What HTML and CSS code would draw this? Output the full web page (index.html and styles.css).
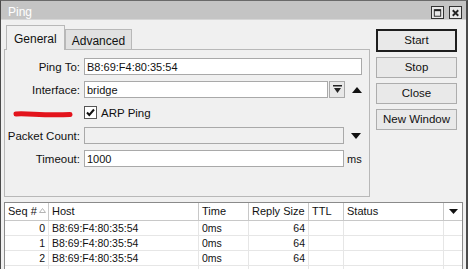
FILE: index.html
```html
<!doctype html>
<html>
    <head>
        <meta charset="UTF-8">
        <title>Ping</title>
        <link rel="stylesheet" href="styles.css">
    </head>
    <body>
        <div class="window">
            <div class="titlebar">
                <span class="title">Ping</span>
                <span class="tbtn">
                    <svg width="12" height="12" viewBox="0 0 12 12"><rect x="2.5" y="2.5" width="7" height="7" fill="none" stroke="#222" stroke-width="1"/><line x1="2.5" y1="3" x2="9.5" y2="3" stroke="#222" stroke-width="2"/></svg>
                </span>
                <span class="tbtn">
                    <svg width="12" height="12" viewBox="0 0 12 12"><path d="M3 3 L9 9 M9 3 L3 9" stroke="#222" stroke-width="2"/></svg>
                </span>
            </div>
            <div class="content">
                <div class="top">
                    <div class="tabbox">
                        <div class="tabs">
                            <div class="tab active">General</div>
                            <div class="tab">Advanced</div>
                        </div>
                        <div class="panel">
                            <div class="row">
                                <div class="label">Ping To:</div>
                                <div class="input wide">B8:69:F4:80:35:54</div>
                            </div>
                            <div class="row">
                                <div class="label">Interface:</div>
                                <div class="input iface">bridge</div>
                                <div class="dropbtn">
                                    <svg width="9" height="9" viewBox="0 0 9 9"><rect x="0" y="0" width="9" height="1.5" fill="#222"/><path d="M1 3 H8 L4.5 8 Z" fill="#222"/></svg>
                                </div>
                                <div class="arrow">
                                    <svg width="10" height="6" viewBox="0 0 10 6"><path d="M0 6 L5 0 L10 6 Z" fill="#111"/></svg>
                                </div>
                            </div>
                            <div class="row">
                                <div class="label">
                                    <svg class="scribble" width="60" height="8" viewBox="0 0 60 8"><path d="M3 4 C15 3, 30 6, 57 4.5" stroke="#e3141c" stroke-width="5" stroke-linecap="round" fill="none"/></svg>
                                </div>
                                <div class="check">
                                    <svg width="11" height="11" viewBox="0 0 11 11"><path d="M2 5.5 L4.3 8 L9 2.5" stroke="#111" stroke-width="2" fill="none"/></svg>
                                </div>
                                <div class="checklabel">ARP Ping</div>
                            </div>
                            <div class="row">
                                <div class="label">Packet Count:</div>
                                <div class="input mid disabled"></div>
                                <div class="arrow">
                                    <svg width="10" height="6" viewBox="0 0 10 6"><path d="M0 0 L10 0 L5 6 Z" fill="#111"/></svg>
                                </div>
                            </div>
                            <div class="row">
                                <div class="label">Timeout:</div>
                                <div class="input mid">1000</div>
                                <div class="unit">ms</div>
                            </div>
                        </div>
                    </div>
                    <div class="buttons">
                        <div class="btn default">Start</div>
                        <div class="btn">Stop</div>
                        <div class="btn">Close</div>
                        <div class="btn">New Window</div>
                    </div>
                </div>
                <div class="table">
                    <div class="th">Seq #<svg class="sort" width="7" height="5" viewBox="0 0 7 5"><path d="M0.5 4.5 L3.5 0.5 L6.5 4.5 Z" fill="none" stroke="#b4b4b4" stroke-width="1"/></svg></div>
                    <div class="th">Host</div>
                    <div class="th">Time</div>
                    <div class="th">Reply Size</div>
                    <div class="th">TTL</div>
                    <div class="th">Status</div>
                    <div class="th menu">
                        <svg width="9" height="5" viewBox="0 0 9 5"><path d="M0 0 L9 0 L4.5 5 Z" fill="#111"/></svg>
                    </div>

                    <div class="td right">0</div>
                    <div class="td">B8:69:F4:80:35:54</div>
                    <div class="td">0ms</div>
                    <div class="td right">64</div>
                    <div class="td"></div>
                    <div class="td"></div>
                    <div class="td"></div>

                    <div class="td right">1</div>
                    <div class="td">B8:69:F4:80:35:54</div>
                    <div class="td">0ms</div>
                    <div class="td right">64</div>
                    <div class="td"></div>
                    <div class="td"></div>
                    <div class="td"></div>

                    <div class="td right">2</div>
                    <div class="td">B8:69:F4:80:35:54</div>
                    <div class="td">0ms</div>
                    <div class="td right">64</div>
                    <div class="td"></div>
                    <div class="td"></div>
                    <div class="td"></div>

                    <div class="td"></div>
                    <div class="td"></div>
                    <div class="td"></div>
                    <div class="td"></div>
                    <div class="td"></div>
                    <div class="td"></div>
                    <div class="td"></div>
                </div>
            </div>
        </div>
    </body>
</html>
```

FILE: styles.css
```css
*{
    margin: 0;
    padding: 0;
    box-sizing: border-box;
}
body{
    background: #ffffff;
    font-family: "Liberation Sans", Arial, sans-serif;
    font-size: 11px;
    color: #111;
}
.window{                            /* outer window frame */
    width: 468px;
    height: 269px;
    border-top: 1px solid #6a6a6a;
    border-left: 1px solid #4a4a4a;
    border-right: 2px solid #4a4a4a;
    display: flex;
    flex-direction: column;
    overflow: hidden;
}
.titlebar{
    height: 20px;
    background: #c4c4c4;
    border-bottom: 1px solid #d6d6d6;
    display: flex;
    align-items: center;
    padding: 0 4px 0 7px;
}
.title{
    flex: 1;
    color: #ffffff;
    font-size: 12px;
    padding-top: 3px;
}
.tbtn{
    width: 13px;
    height: 13px;
    margin: 5px 0 0 5px;
    border: 1px solid #333;
    background: #e8e8e8;
    display: flex;
    align-items: center;
    justify-content: center;
}
.content{
    flex: 1;
    background: #f0f0f0;
    padding: 5px 3px 0 3px;
    display: flex;
    flex-direction: column;
}
.top{
    display: flex;
}
.tabbox{
    flex: 1;
}
.tabs{
    display: flex;
    align-items: flex-end;
    padding-left: 2px;
    height: 24px;
}
.tab{
    height: 20px;
    padding: 4px 6px 0 6px;
    border: 1px solid #b8b8b8;
    border-bottom: none;
    background: #e1e1e1;
    font-size: 12px;
}
.tab.active{
    height: 25px;
    margin-bottom: -1px;
    padding: 6px 7px 0 7px;
    background: #f0f0f0;
    position: relative;
    z-index: 1;
}
.panel{
    height: 148px;
    border: 1px solid #b8b8b8;
    padding-top: 8px;
}
.row{
    display: flex;
    align-items: center;
    height: 17px;
    margin-bottom: 6px;
}
.label{
    width: 79px;
    padding-right: 4px;
    text-align: right;
    white-space: nowrap;
    font-size: 11.5px;
}
.scribble{
    display: block;
    margin: 2px 0 0 8px;
}
.input{
    height: 17px;
    border: 1px solid #a9a9a9;
    background: #ffffff;
    padding: 1px 2px 0 2px;
    font-size: 11px;
    line-height: 14px;
}
.input.wide{
    width: 278px;
}
.input.iface{
    width: 244px;
}
.input.mid{
    width: 260px;
}
.input.disabled{
    background: #f0f0f0;
}
.dropbtn{
    width: 16px;
    height: 17px;
    margin-left: 1px;
    border: 1px solid #a9a9a9;
    background: #e8e8e8;
    display: flex;
    align-items: center;
    justify-content: center;
}
.arrow{
    margin-left: 7px;
    display: flex;
}
.check{
    width: 13px;
    height: 13px;
    border: 1px solid #555;
    background: #ffffff;
    display: flex;
    align-items: center;
    justify-content: center;
}
.checklabel{
    margin-left: 4px;
    font-size: 11.5px;
}
.unit{
    margin-left: 3px;
    font-size: 11px;
}
.buttons{                           /* right hand button column */
    width: 81px;
    margin: 4px 6px 0 6px;
    display: flex;
    flex-direction: column;
    gap: 5px;
}
.btn{
    height: 21px;
    border: 1px solid #adadad;
    background: #e9e9e9;
    font-size: 11.5px;
    text-align: center;
    line-height: 19px;
}
.btn.default{
    height: 23px;
    border: 2px solid #1e1e1e;
    line-height: 19px;
}
.table{
    margin-top: 5px;
    border: 1px solid #8a8a8a;
    background: #ffffff;
    display: grid;
    grid-template-columns: 44px 150px 50px 60px 35px 100px 1fr;
    grid-auto-rows: 15px;
    grid-template-rows: 18px;
}
.th{
    padding: 2px 3px 0 3px;
    border-right: 1px solid #c8c8c8;
    border-bottom: 1px solid #c8c8c8;
    font-size: 11px;
    white-space: nowrap;
}
.th.menu{
    border-right: none;
    display: flex;
    justify-content: center;
    padding-top: 6px;
}
.sort{
    margin: 0 0 4px 2px;
    vertical-align: middle;
}
.td{
    padding: 1px 3px 0 3px;
    border-right: 1px solid #e6e6e6;
    border-bottom: 1px solid #e6e6e6;
    white-space: nowrap;
    font-size: 10.5px;
}
.td:nth-child(7n){
    border-right: none;
}
.right{
    text-align: right;
}
```
